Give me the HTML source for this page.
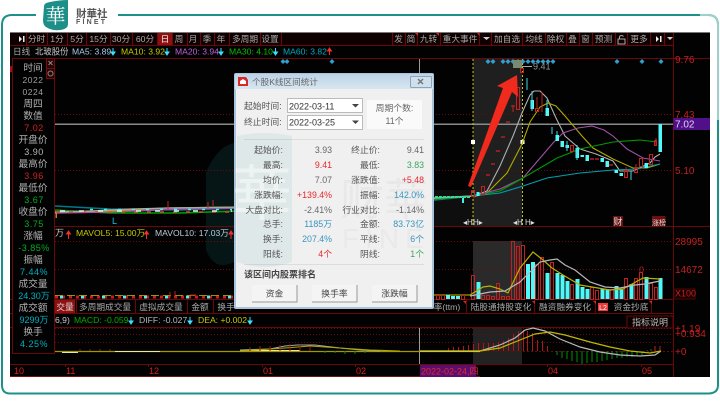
<!DOCTYPE html>
<html><head><meta charset="utf-8"><style>
html,body{margin:0;padding:0;width:720px;height:409px;overflow:hidden;background:#fff}
svg{display:block;filter:blur(.35px)}
text{font-family:"Liberation Sans","Noto Sans CJK SC","WenQuanYi Zen Hei",sans-serif;font-size:9px;fill:#b4b4b4}
.t text{text-anchor:middle;font-size:8.7px;fill:#a8a8a8}
.p text{text-anchor:middle;font-size:9.7px}
.d text{font-size:8.8px;fill:#555;text-anchor:end}
.r{fill:#e8282c!important}.b{fill:#3a94c0!important}.g{fill:#3aa860!important}.k{fill:#666!important}
.a text{font-size:10px;fill:#c42020}
polyline{fill:none}
</style></head><body>
<svg width="720" height="409" viewBox="0 0 720 409">
<rect width="720" height="409" fill="#fff"/>
<path d="M36,15H12Q2,15 2,25V385Q2,393.5 10,393.5H708Q718,393.5 718,385V25Q718,15 708,15H118" fill="none" stroke="#1d908b" stroke-width="2"/>
<path d="M700,15H708Q718,15 718,25V120" fill="none" stroke="#9fd0cc" stroke-width="2"/>
<path d="M44,6Q44,3 50,2Q60,0 68,0V24Q68,29 60,30Q52,31 46,27Q43,25 43,20Z" fill="#1d8f88"/>
<text x="55.500" y="23" style="font-size:20px;fill:#fff;text-anchor:middle;font-family:'Noto Serif CJK SC',serif">華</text>
<text x="76" y="17" style="font-size:10.500px;fill:#555;font-weight:bold">財華社</text>
<text x="76" y="24" style="font-size:7px;fill:#555;letter-spacing:2.2px;font-weight:bold">FINET</text>

<!-- black -->
<rect x="10" y="32" width="700" height="345" fill="#020202"/>
<rect x="10" y="32" width="700" height="1" fill="#777"/>
<rect x="10" y="376" width="470" height="1" fill="#7a1010"/>
<path d="M206,172Q218,146 234,143V262Q215,272 206,250Z" fill="#061616"/>
<!-- toolbar -->
<rect x="10" y="33" width="664" height="12" fill="#0e0000"/>
<g stroke="#6a0808" stroke-width="1">
<path d="M26.500,33V45M47.500,33V45M67.500,33V45M86.500,33V45M110.500,33V45M132.500,33V45M157.500,33V45M172.500,33V45M187.500,33V45M200.500,33V45M214.500,33V45M229.500,33V45M260.500,33V45M281.500,33V45M392.500,33V45M405.500,33V45M417.500,33V45M440.500,33V45M479.500,33V45M491.500,33V45M522.500,33V45M545.500,33V45M566.500,33V45M579.500,33V45M592.500,33V45M615.500,33V45M627.500,33V45M650.500,33V45M664.500,33V45M673.500,33V45" fill="none"/>
<path d="M10,45.500H674M55,58.500H710M55,226.500H710M10,299.500H674M10,313.500H674M10,327.500H674M10,364.500H674M673.500,45V377" fill="none"/>
</g>
<rect x="158" y="33" width="14" height="12" fill="#8e1010"/>
<path d="M15,39h4v-3l3,3-3,3v-3h-4zM23,36h1.500v6H23z" fill="#eee"/>
<g class="t">
<text x="36.500" y="42">分时</text><text x="57" y="42">1分</text><text x="77" y="42">5分</text><text x="98.500" y="42">15分</text><text x="121" y="42">30分</text><text x="145" y="42">60分</text><text x="165" y="42" style="fill:#eee">日</text><text x="179" y="42">周</text><text x="193" y="42">月</text><text x="207" y="42">季</text><text x="221" y="42">年</text><text x="245" y="42">多周期</text><text x="270" y="42">设置</text>
<text x="398.500" y="42">发</text><text x="411" y="42">简</text><text x="428.500" y="42">九转</text><text x="460" y="42">重大事件</text><text x="507" y="42">加自选</text><text x="534" y="42">均线</text><text x="555.500" y="42">除权</text><text x="572.500" y="42">叠</text><text x="585.500" y="42">窗</text><text x="603.500" y="42">预测</text><text x="639" y="42">更多</text>
</g>
<path d="M483,37h7l-3.500,3zM667,37h6l-3,3z" fill="#ccc"/>
<path d="M652,39h4v-3l3,3-3,3v-3h-4zM660,36h1.500v6H660z" fill="#eee"/>
<rect x="618" y="39" width="7" height="5" fill="none" stroke="#aaa"/><path d="M619.500,39V36.500Q621.500,34.500 623.500,36.500" fill="none" stroke="#aaa"/>
<path d="M415,33h3v3zM436,33h3v3zM477,33h2.500v3z" fill="#e02020"/>
<!-- MA row -->
<text x="13" y="54.500" style="font-size:8.600px;fill:#aaa">日线</text><text x="35" y="54.500" style="font-size:8.400px;fill:#c8c8c8">北玻股份</text>
<text x="72" y="54.500" style="font-size:8.600px;fill:#a8cce8">MA5: 3.89</text><path d="M113,48v5M111,52l2,3 2,-3z" stroke="#3fe0ff" fill="#3fe0ff"/>
<text x="121" y="54.500" style="font-size:8.600px;fill:#c8c800">MA10: 3.92</text><path d="M167,48v5M165,52l2,3 2,-3z" stroke="#3fe0ff" fill="#3fe0ff"/>
<text x="175" y="54.500" style="font-size:8.600px;fill:#c060d8">MA20: 3.94</text><path d="M221,48v5M219,52l2,3 2,-3z" stroke="#3fe0ff" fill="#3fe0ff"/>
<text x="229" y="54.500" style="font-size:8.600px;fill:#00c000">MA30: 4.10</text><path d="M275.500,48v5M273.500,52l2,3 2,-3z" stroke="#3fe0ff" fill="#3fe0ff"/>
<text x="283" y="54.500" style="font-size:8.600px;fill:#00a8c0">MA60: 3.82</text><path d="M329.500,50v5M327.500,51l2,-3 2,3z" stroke="#f03030" fill="#f03030"/>

<!-- left panel -->
<rect x="12.500" y="58.500" width="42" height="295" fill="#020202" stroke="#6a0808"/>
<rect x="10" y="66" width="2" height="6" fill="#a01010"/>
<rect x="46.500" y="58.500" width="8" height="10" fill="#2a0404" stroke="#7a0a0a"/><rect x="46.500" y="68.500" width="8" height="10" fill="#2a0404" stroke="#7a0a0a"/>
<path d="M48.500,61l4,4M52.500,61l-4,4" stroke="#888"/><circle cx="50.500" cy="73.500" r="2.500" fill="none" stroke="#888"/>
<g class="p">
<text x="33" y="71" style="fill:#b0b0b0">时间</text><text x="33" y="83" style="fill:#a0a0a0;font-size:8.500px;letter-spacing:.5px">2022</text><text x="33" y="95" style="fill:#a0a0a0;font-size:8.500px;letter-spacing:.5px">0224</text><text x="33" y="107" style="fill:#b0b0b0">周四</text><text x="33" y="119" style="fill:#b0b0b0">数值</text><text x="34" y="131" style="fill:#d82020;font-size:9px;letter-spacing:.5px">7.02</text>
<text x="33" y="143" style="fill:#b0b0b0">开盘价</text><text x="34" y="155" style="fill:#b8b8b8;font-size:9px;letter-spacing:.5px">3.90</text>
<text x="33" y="167" style="fill:#b0b0b0">最高价</text><text x="34" y="179" style="fill:#d02020;font-size:9px;letter-spacing:.5px">3.96</text>
<text x="33" y="191" style="fill:#b0b0b0">最低价</text><text x="34" y="203" style="fill:#00b020;font-size:9px;letter-spacing:.5px">3.67</text>
<text x="33" y="215" style="fill:#b0b0b0">收盘价</text><text x="34" y="227" style="fill:#00b020;font-size:9px;letter-spacing:.5px">3.75</text>
<text x="33" y="239" style="fill:#b0b0b0">涨幅</text><text x="34" y="251" style="fill:#00b020;font-size:9px;letter-spacing:.5px">-3.85%</text>
<text x="33" y="263" style="fill:#b0b0b0">振幅</text><text x="34" y="275" style="fill:#00b0c0;font-size:9px;letter-spacing:.5px">7.44%</text>
<text x="33" y="287" style="fill:#b0b0b0">成交量</text><text x="34" y="299" style="fill:#00b0c0;font-size:9px">24.30万</text>
<text x="33" y="311" style="fill:#b0b0b0">成交额</text><text x="34" y="323" style="fill:#00b0c0;font-size:9px">9299万</text>
<text x="33" y="335" style="fill:#b0b0b0">换手</text><text x="34" y="347" style="fill:#00b0c0;font-size:9px;letter-spacing:.5px">4.25%</text>
</g>

<!-- selection -->
<rect x="473" y="59" width="49" height="167" fill="#1f1f1f"/>
<rect x="473" y="241" width="49" height="58" fill="#2a2a2a"/>
<rect x="473" y="328" width="49" height="36" fill="#222"/>
<rect x="433" y="190" width="40" height="36" fill="#0e0e0e"/>
<!-- grid -->
<g stroke="#6a0a0a" stroke-dasharray="1 2" fill="none">
<path d="M55,114.500H673M55,170.500H673M55,241.500H673M55,269.500H673M55,328.500H673M55,334.500H673M55,342.500H673"/>
</g>
<rect x="55" y="123.500" width="618" height="1.500" fill="#8a8a8a"/>
<path d="M419.500,59V226M419.500,328V364" stroke="#9a9a9a"/>
<path d="M473,59V226M522.500,59V226" stroke="#c8c800" stroke-dasharray="2 2"/>
<rect x="471" y="140" width="4" height="4" fill="#fff"/><rect x="520.500" y="140" width="4" height="4" fill="#fff"/>
<!-- diamonds -->
<g fill="#2da0d0">
<path d="M283,59l2.500,2.500-2.500,2.500-2.500,-2.500zM287,59l2.500,2.500-2.500,2.500-2.500,-2.500zM332,59l2.500,2.500-2.500,2.500-2.500,-2.500zM488,59l2.500,2.500-2.500,2.500-2.500,-2.500zM493,59l2.500,2.500-2.500,2.500-2.500,-2.500zM503,59l2.500,2.500-2.500,2.500-2.500,-2.500zM508,59l2.500,2.500-2.500,2.500-2.500,-2.500zM513,59l2.500,2.500-2.500,2.500-2.500,-2.500zM518,59l2.500,2.500-2.500,2.500-2.500,-2.500zM523,59l2.500,2.500-2.500,2.500-2.500,-2.500zM528,59l2.500,2.500-2.500,2.500-2.500,-2.500zM533,59l2.500,2.500-2.500,2.500-2.500,-2.500zM538,59l2.500,2.500-2.500,2.500-2.500,-2.500zM543,59l2.500,2.500-2.500,2.500-2.500,-2.500zM548,59l2.500,2.500-2.500,2.500-2.500,-2.500zM553,59l2.500,2.500-2.500,2.500-2.500,-2.500zM617,59l2.500,2.500-2.500,2.500-2.500,-2.500zM642,59l2.500,2.500-2.500,2.500-2.500,-2.500zM661,59l2.500,2.500-2.500,2.500-2.500,-2.500z"/>
</g>
<rect x="513" y="60" width="9" height="8" fill="#7a8a70"/>
<path d="M522,66.500H532" stroke="#aaa"/><text x="533" y="69.500" style="font-size:9px;fill:#999">9.41</text>

<!-- left ma cluster -->
<polyline points="55,206 110,209 180,210 240,208 300,207 435,200 473,196" stroke="#007a8a" stroke-width="1.500"/>
<polyline points="55,210 110,213 180,213 240,211 300,208 435,199 473,196" stroke="#00a000" stroke-width="1.500"/>
<polyline points="55,213 110,212 180,209 240,208 300,207 435,198 473,196" stroke="#a050b0" stroke-width="1.500"/>
<polyline points="55,212 110,211 165,208 240,207 300,208 435,198 473,196" stroke="#b0b000" stroke-width="1.200"/>
<polyline points="55,212 90,211 130,209 170,208 240,207 300,207 435,198 473,196" stroke="#aaa" stroke-width="1.200"/>
<path d="M56,212H232" stroke="#e04040" stroke-width="1.500" stroke-dasharray="4 9"/>
<path d="M60,211H232" stroke="#d8f8e8" stroke-width="1.500" stroke-dasharray="5 14"/>
<path d="M90,209.500H232" stroke="#50f0f0" stroke-width="1.500" stroke-dasharray="3 11"/>
<path d="M168,201v8M208,202v6M213,200v6" stroke="#c82020"/>
<rect x="55.500" y="213" width="1.500" height="5" fill="#c08040"/>
<text x="112" y="224" style="font-size:9px;fill:#1ac0e0">L</text>
<path d="M435,197H470" stroke="#30e090" stroke-width="2" stroke-dasharray="3 1"/><path d="M463,198v5" stroke="#40f0f0" stroke-width="2"/>

<!-- MAs main -->
<polyline points="473,196 487,191 500,166 513,136 522,113 530,95 534,91 540,91 547,98 556,118 565,136 580,149 596,154 613,161 620,171 633,171 650,163 655,157 660,154" stroke="#b0b0b0" stroke-width="1.100"/>
<polyline points="473,197 487,193 507,173 522,144 530,122 540,107 548,103 556,106 565,116 582,136 593,148 613,159 633,168 647,168 660,164" stroke="#b0a800" stroke-width="1.100"/>
<polyline points="473,196 500,189 523,178 553,143 563,133 578,128 592,126 604,130 613,136 627,149 643,158 660,161" stroke="#a050a8" stroke-width="1.100"/>
<polyline points="473,196 500,191 523,178 557,158 580,149 613,142 640,140 657,142" stroke="#009a00" stroke-width="1.100"/>
<polyline points="473,196 500,193 523,186 547,178 580,173 613,170 637,169 660,164" stroke="#00a0b0" stroke-width="1.100"/>

<!-- candles cyan -->
<g fill="#50f8f8">
<rect x="530.500" y="100" width="3.500" height="9"/><rect x="545.500" y="108" width="3.500" height="8"/><rect x="555.500" y="135" width="3.500" height="6"/><rect x="560.500" y="141" width="3.500" height="6"/><rect x="565.500" y="145" width="3.500" height="3"/><rect x="575.500" y="148" width="3.500" height="10"/><rect x="580.500" y="155" width="3.500" height="2"/><rect x="585.500" y="155" width="3.500" height="6"/><rect x="600.500" y="158" width="3.500" height="4"/><rect x="605.500" y="161" width="3.500" height="6"/><rect x="614.500" y="170" width="3.500" height="3"/><rect x="619.500" y="173" width="3.500" height="3"/><rect x="644.500" y="163" width="3.500" height="5"/><rect x="658.500" y="124" width="3.500" height="28"/><rect x="476.500" y="192" width="3" height="4"/>
</g>
<path d="M527,78V90M532,91V111M547,100V108M552,127V134M557,131V135M567,141V151M577,145V160M631,171V180" stroke="#40d8e0"/>
<g fill="none" stroke="#c82020">
<rect x="516.500" y="87.500" width="3" height="22"/><rect x="520.500" y="68.500" width="3" height="4"/><rect x="481.500" y="186.500" width="3" height="8"/><rect x="471.500" y="190.500" width="3" height="6"/><rect x="570.500" y="145.500" width="3" height="6"/><rect x="624.500" y="170.500" width="3" height="7"/><rect x="634.500" y="168.500" width="3" height="4"/><rect x="639.500" y="158.500" width="3" height="8"/><rect x="649.500" y="154.500" width="3" height="10"/><rect x="654.500" y="140.500" width="2" height="5"/><rect x="535.500" y="108.500" width="3" height="3"/>
<path d="M513,105V112M511,106H515M537,97V108M542,92V112M626,167V170M636,164V168M656,138V146"/>
</g>
<path d="M506,122h4M501,137h4M496,151h4M491,164h4M486,175h4M590,159h4M595,159h4M609,165h4" stroke="#b02020" stroke-width="1.500"/>
<!-- red arrow -->
<path d="M468,186L503,88 497,86 517,75 518,97 512,92 471,187Z" fill="#f02a1c"/>
<!-- selection markers -->
<text x="463" y="225" style="font-size:8px;fill:#ddd">◂H</text><text x="473" y="225" style="font-size:8px;fill:#ddd">H▸</text>
<text x="513" y="225" style="font-size:8px;fill:#ddd">◂H</text><text x="525" y="225" style="font-size:8px;fill:#ddd">H▸</text>
<rect x="613" y="216" width="10" height="10" fill="#6a1010"/><text x="613.500" y="225" style="font-size:9px;fill:#ddd">财</text>
<rect x="652" y="216" width="13.500" height="10" fill="#6a1010"/><text x="652" y="225" style="font-size:7px;fill:#ddd">涨榜</text>
<!-- MAVOL row -->
<text x="55" y="236" style="font-size:9px;fill:#c8c8c8">万</text><path d="M68.500,233v6M66.500,234l2,-3 2,3z" stroke="#f03030" fill="#f03030"/>
<text x="76" y="236" style="font-size:8.600px;fill:#c8c800">MAVOL5: 15.00万</text><path d="M146.500,233v6M144.500,234l2,-3 2,3z" stroke="#f03030" fill="#f03030"/>
<text x="155" y="236" style="font-size:8.600px;fill:#c0c8d8">MAVOL10: 17.03万</text><path d="M231,233v6M229,234l2,-3 2,3z" stroke="#f03030" fill="#f03030"/>
<!-- vol bars -->
<path d="M55,297H432" stroke="#c02020" stroke-width="3" stroke-dasharray="3 4"/>
<path d="M60,297H432" stroke="#50f0f0" stroke-width="3" stroke-dasharray="3 18"/>
<path d="M55,295.500H235" stroke="#b0a000" stroke-dasharray="8 4" opacity=".9"/>
<path d="M170,292v6M175,291v7M250,294h14M190,295h6" stroke="#b02020"/>
<polyline points="433,295 470,295" stroke="#c8c000" stroke-width="1"/>
<g fill="none" stroke="#c02020">
<rect x="471.500" y="275.500" width="3" height="24"/><rect x="436.500" y="295.500" width="3" height="4"/><rect x="441.500" y="295.500" width="3" height="4"/><rect x="461.500" y="295.500" width="3" height="4"/><rect x="481.500" y="295.500" width="3" height="4"/><rect x="486.500" y="295.500" width="3" height="4"/><rect x="491.500" y="296.500" width="3" height="3"/><rect x="496.500" y="283.500" width="3" height="16"/><rect x="501.500" y="296.500" width="3" height="3"/><rect x="506.500" y="296.500" width="3" height="3"/><rect x="511.500" y="241.500" width="3" height="58"/><rect x="516.500" y="246.500" width="3" height="53"/><rect x="521.500" y="245.500" width="3" height="54"/><rect x="535.500" y="264.500" width="3" height="35"/><rect x="540.500" y="257.500" width="3" height="42"/><rect x="570.500" y="284.500" width="3" height="15"/><rect x="590.500" y="287.500" width="3" height="12"/><rect x="595.500" y="290.500" width="3" height="9"/><rect x="610.500" y="289.500" width="3" height="10"/><rect x="624.500" y="278.500" width="3" height="21"/><rect x="634.500" y="278.500" width="3" height="21"/><rect x="639.500" y="272.500" width="3" height="27"/><rect x="649.500" y="283.500" width="3" height="16"/><rect x="654.500" y="287.500" width="3" height="12"/><rect x="550.500" y="262.500" width="3" height="37"/>
</g>
<g fill="#50f8f8">
<rect x="446" y="295" width="4" height="4"/><rect x="451" y="296" width="4" height="3"/><rect x="456" y="296" width="4" height="3"/><rect x="476.500" y="282" width="4" height="17"/><rect x="526" y="264" width="4" height="35"/><rect x="531" y="262" width="4" height="37"/><rect x="545.500" y="273" width="4" height="26"/><rect x="555.500" y="273" width="4" height="26"/><rect x="560.500" y="275" width="4" height="24"/><rect x="565.500" y="281" width="4" height="18"/><rect x="575.500" y="279" width="4" height="20"/><rect x="580.500" y="287" width="4" height="12"/><rect x="585.500" y="289" width="4" height="10"/><rect x="600.500" y="289" width="4" height="10"/><rect x="605.500" y="289" width="4" height="10"/><rect x="614.500" y="286" width="4" height="13"/><rect x="619.500" y="289" width="4" height="10"/><rect x="629.500" y="284" width="4" height="15"/><rect x="644.500" y="277" width="4" height="22"/><rect x="658.500" y="278" width="4" height="21"/>
</g>
<polyline points="470,295 483,287 490,286 500,289 508,293 520,268 533,252 543,260 552,268 563,275 580,285 610,290 623,289 643,278 660,279" stroke="#b8b000" stroke-width="1.200"/>
<polyline points="470,296 490,292 505,291 520,282 530,272 540,262 550,260 557,259 565,265 575,270 590,282 605,287 620,288 635,285 645,284 660,281" stroke="#b8b8b8" stroke-width="1.200"/>
<!-- tabs -->
<rect x="55" y="300" width="20" height="13" fill="#8e1010"/>
<g stroke="#6a0808"><path d="M76.500,300V313M135.500,300V313M187.500,300V313M213.500,300V313M466.500,300V313M534.500,300V313M595.500,300V313M651.500,300V313" fill="none"/></g>
<g class="t">
<text x="65" y="310" style="fill:#ddd">交量</text><text x="105" y="310">多周期成交量</text><text x="161" y="310">虚拟成交量</text><text x="200" y="310">金额</text><text x="226" y="310">换手</text>
<text x="447" y="310">率(ttm)</text><text x="501" y="310">陆股通持股变化</text><text x="565" y="310">融资融券变化</text><text x="631" y="310">资金抄底</text>
</g>
<rect x="598" y="303" width="10" height="8" fill="#f03a3a"/><text x="603" y="310" style="font-size:7px;fill:#fff;text-anchor:middle">L2</text>
<path d="M463,301h3v3zM532,301h3v3zM593,301h3v3zM649,301h3v3z" fill="#e02020"/>
<!-- MACD row -->
<text x="55" y="323" style="font-size:8.600px;fill:#c8c8c8">6,9)</text>
<text x="74" y="323" style="font-size:8.600px;fill:#00b000">MACD: -0.059</text><path d="M131,317v5M129,321l2,3 2,-3z" stroke="#3fe0ff" fill="#3fe0ff"/>
<text x="139" y="323" style="font-size:8.600px;fill:#b8b8b8">DIFF: -0.027</text><path d="M190,317v5M188,321l2,3 2,-3z" stroke="#3fe0ff" fill="#3fe0ff"/>
<text x="198" y="323" style="font-size:8.600px;fill:#c8c800">DEA: +0.002</text><path d="M250,317v5M248,321l2,3 2,-3z" stroke="#3fe0ff" fill="#3fe0ff"/>
<rect x="627" y="316" width="46" height="12" fill="#0a0000" stroke="#6a0808"/>
<text x="650" y="325.500" style="font-size:9px;fill:#bbb;text-anchor:middle">指标说明</text>
<!-- macd -->
<path d="M55,351.500H673" stroke="#6a0808" stroke-dasharray="2 2"/>
<path d="M55,351.500H480" stroke="#a09800" stroke-width="1.200"/>
<path d="M62,352.500H78M115,351.500H160M240,350.500H300M420,351.500H480" stroke="#e8e8a0" stroke-width="1"/>
<polyline points="240,350 270,349 285,346 297,345 315,345 340,348 360,350 380,351" stroke="#a8a8a8" stroke-width="1.100"/>
<polyline points="240,351 285,348 310,346 340,348 370,350 400,351" stroke="#b0a800" stroke-width="1.100"/>
<path d="M80,351V349M90,351V349M100,351V349M110,351V349M250,351V347M260,351V346M270,351V346M280,351V345M290,351V344M300,351V345M310,351V346" stroke="#a01818"/>
<path d="M325,351V353M335,351V353M345,351V354M355,351V354M365,351V353" stroke="#009000"/>
<path d="M448.500,351V348M453.500,351V347M458.500,351V347M463.500,351V346M468.500,351V345M473.500,351V344M478.500,351V343M483.500,351V343M488.500,351V343M493.500,351V343M498.500,351V342M503.500,351V341M508.500,351V338M513.500,351V334M518.500,351V331M523.500,351V330M527.500,351V331M532.500,351V333M537.500,351V340M542.500,351V341M547.500,351V346" stroke="#b01818"/>
<path d="M557,351V355M562,351V358M567,351V359M572,351V361M577,351V362M582,351V364M587,351V363M592,351V362M597,351V362M602,351V361M607,351V360M612,351V359M617,351V358M622,351V358M627,351V357M632,351V357M637,351V356M642,351V355M647,351V350M651,351V349" stroke="#009000"/>
<path d="M655,351V346M660,351V346" stroke="#c02020"/>
<polyline points="420,351 480,351 500,345 515,338 525,330 533,328 545,331 560,339 580,347 600,352 620,355 640,356 655,355 661,351" stroke="#b8b8b8" stroke-width="1.200"/>
<polyline points="420,351 480,351 500,348 520,340 535,334 550,332 565,335 590,342 610,347 630,351 650,353 661,351" stroke="#c0b800" stroke-width="1.200"/>
<!-- date axis -->
<g stroke="#6a0808"><path d="M65.500,364V367M148.500,364V367M262.500,364V367M355.500,364V367M547.500,364V367M641.500,364V367"/></g>
<text x="14" y="374" style="font-size:9px;fill:#d82020">10</text><text x="66" y="374" style="font-size:9px;fill:#d82020">11</text><text x="149" y="374" style="font-size:9px;fill:#d82020">12</text><text x="263" y="374" style="font-size:9px;fill:#d82020">01</text><text x="356" y="374" style="font-size:9px;fill:#d82020">02</text><text x="548" y="374" style="font-size:9px;fill:#d82020">04</text><text x="642" y="374" style="font-size:9px;fill:#d82020">05</text>
<rect x="420" y="365" width="56" height="12" fill="#5a0f70"/>
<text x="421" y="374.500" style="font-size:9px;fill:#e82828">2022-02-24,四</text>
<!-- right axis -->
<rect x="673.500" y="118" width="36.500" height="12" fill="#50108a"/>
<rect x="674" y="289" width="21" height="10" fill="#1a0000" stroke="#4a0808"/>
<g class="a">
<text x="675" y="63">9.76</text><text x="675" y="118">7.43</text><text x="675" y="127.500" style="fill:#e0d0f0">7.02</text><text x="675" y="174">5.10</text>
<text x="675" y="245">28995</text><text x="675" y="273">14672</text><text x="675" y="296.500" style="font-size:9px">X100</text>
<text x="675" y="332">+1.19</text><text x="675" y="337">+0.934</text><text x="675" y="355">+0</text><text x="639" y="273" style="font-size:9px">0</text>
</g>

<!-- dialog -->
<rect x="234" y="73" width="200" height="236" rx="2" fill="#a8c4dc"/>
<defs><linearGradient id="tb" x1="0" y1="0" x2="0" y2="1"><stop offset="0" stop-color="#bcd4e8"/><stop offset="1" stop-color="#d8e6f0"/></linearGradient></defs>
<rect x="235" y="74" width="198" height="15" fill="url(#tb)"/>
<rect x="236" y="89" width="196" height="218" fill="#f0f0f0"/>
<path d="M238,77h8l2,3v6h-10z" fill="#d82828"/><path d="M240,81l3,-2 3,2v3h-6z" fill="#fff"/>
<text x="252" y="85" style="font-size:8.600px;fill:#666">个股K线区间统计</text>
<rect x="410.500" y="76.500" width="21" height="11" rx="1" fill="#cfe0ec" stroke="#8ca4b8"/><path d="M418,79l5,5M423,79l-5,5" stroke="#777" stroke-width="1.500"/>
<text x="244" y="109" style="font-size:8.800px;fill:#555">起始时间:</text><text x="244" y="125" style="font-size:8.800px;fill:#555">终止时间:</text>
<rect x="287.500" y="98.500" width="75" height="14" fill="#fff" stroke="#bbb"/><rect x="287.500" y="115.500" width="75" height="14" fill="#fff" stroke="#bbb"/>
<text x="289" y="109.500" style="font-size:9px;fill:#333">2022-03-11</text><text x="289" y="125.500" style="font-size:9px;fill:#333">2022-03-25</text>
<path d="M352,104h7l-3.500,3.500zM352,120.500h7l-3.500,3.500z" fill="#444"/>
<rect x="367" y="100" width="55" height="29" fill="#fafafa"/>
<text x="394.500" y="111" style="font-size:8.800px;fill:#666;text-anchor:middle">周期个数:</text><text x="394.500" y="124" style="font-size:8.800px;fill:#666;text-anchor:middle">11个</text>
<path d="M244,139.500H424M244,264.500H424" stroke="#ddd"/>
<!-- watermark -->
<path d="M237,136Q265,130 292,136V262Q265,272 237,262Z" fill="#1d8f88" opacity=".08"/>
<text x="262" y="215" style="font-size:60px;fill:#fff;opacity:.45;text-anchor:middle">華</text>
<text x="340" y="215" style="font-size:44px;fill:#888;opacity:.07">财華</text>
<text x="342" y="248" style="font-size:28px;fill:#888;opacity:.06;letter-spacing:6px">FINE</text>
<g class="d">
<text x="283" y="153">起始价:</text><text x="332" y="153" class="k">3.93</text><text x="380" y="153">终止价:</text><text x="424" y="153" class="k">9.41</text>
<text x="283" y="168">最高:</text><text x="332" y="168" class="r">9.41</text><text x="380" y="168">最低:</text><text x="424" y="168" class="g">3.83</text>
<text x="283" y="183">均价:</text><text x="332" y="183" class="k">7.07</text><text x="380" y="183">涨跌值:</text><text x="424" y="183" class="r">+5.48</text>
<text x="283" y="198">涨跌幅:</text><text x="332" y="198" class="r">+139.4%</text><text x="380" y="198">振幅:</text><text x="424" y="198" class="b">142.0%</text>
<text x="283" y="213">大盘对比:</text><text x="332" y="213" class="k">-2.41%</text><text x="380" y="213">行业对比:</text><text x="424" y="213" class="k">-1.14%</text>
<text x="283" y="227">总手:</text><text x="332" y="227" class="b">1185万</text><text x="380" y="227">金额:</text><text x="424" y="227" class="b">83.73亿</text>
<text x="283" y="242">换手:</text><text x="332" y="242" class="b">207.4%</text><text x="380" y="242">平线:</text><text x="424" y="242" class="b">6个</text>
<text x="283" y="257">阳线:</text><text x="332" y="257" class="r">4个</text><text x="380" y="257">阴线:</text><text x="424" y="257" class="g">1个</text>
</g>
<text x="244" y="277.500" style="font-size:9px;fill:#444;font-weight:bold">该区间内股票排名</text>
<rect x="252" y="285" width="45" height="17" fill="#f4f4f4"/><path d="M252,302H297V285" fill="none" stroke="#999"/>
<rect x="312" y="285" width="45" height="17" fill="#f4f4f4"/><path d="M312,302H357V285" fill="none" stroke="#999"/>
<rect x="372" y="285" width="45" height="17" fill="#f4f4f4"/><path d="M372,302H417V285" fill="none" stroke="#999"/>
<text x="274.500" y="296.500" style="font-size:8.800px;fill:#444;text-anchor:middle">资金</text><text x="334.500" y="296.500" style="font-size:8.800px;fill:#444;text-anchor:middle">换手率</text><text x="394.500" y="296.500" style="font-size:8.800px;fill:#444;text-anchor:middle">涨跌幅</text>
</svg>
</body></html>
